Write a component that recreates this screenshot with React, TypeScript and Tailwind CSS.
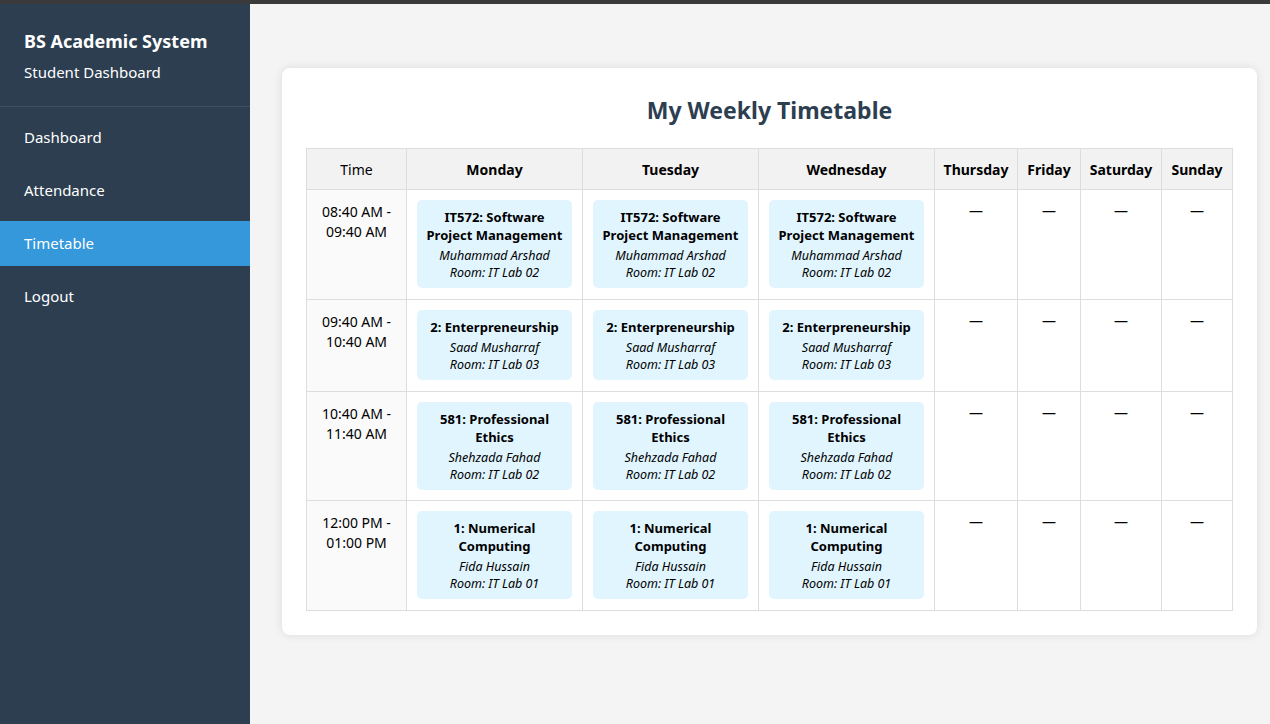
import React from "react";

const font = { fontFamily: '"Noto Sans", "Open Sans", sans-serif' };

type Cls = { title: string; teacher: string; room: string };

const slots: { time: [string, string]; cls: Cls; h: string }[] = [
  { time: ["08:40 AM -", "09:40 AM"], cls: { title: "IT572: Software Project Management", teacher: "Muhammad Arshad", room: "Room: IT Lab 02" }, h: "h-[110px]" },
  { time: ["09:40 AM -", "10:40 AM"], cls: { title: "2: Enterpreneurship", teacher: "Saad Musharraf", room: "Room: IT Lab 03" }, h: "h-[92px]" },
  { time: ["10:40 AM -", "11:40 AM"], cls: { title: "581: Professional Ethics", teacher: "Shehzada Fahad", room: "Room: IT Lab 02" }, h: "h-[109px]" },
  { time: ["12:00 PM -", "01:00 PM"], cls: { title: "1: Numerical Computing", teacher: "Fida Hussain", room: "Room: IT Lab 01" }, h: "h-[110px]" },
];

const days = ["Monday", "Tuesday", "Wednesday", "Thursday", "Friday", "Saturday", "Sunday"];
const widths = ["w-[176px]", "w-[176px]", "w-[176px]", "w-[83px]", "w-[63px]", "w-[81px]", "w-[71px]"];

function ClassBox({ c }: { c: Cls }) {
  return (
    <div className="bg-[#e1f5fe] rounded-[5px] px-2 pt-[8px] pb-[7px] text-center text-black">
      <div className="font-bold text-[13px] leading-[18px]">{c.title}</div>
      <div className="italic text-[12.5px] leading-[17px] mt-[3px]">{c.teacher}</div>
      <div className="italic text-[12.5px] leading-[17px]">{c.room}</div>
    </div>
  );
}

export default function App() {
  const nav = ["Dashboard", "Attendance", "Timetable", "Logout"];
  return (
    <div className="w-[1270px] h-[724px] flex flex-col overflow-hidden" style={font}>
      <div className="h-[4px] bg-[#3a3a3a] shrink-0" />
      <div className="flex flex-1 min-h-0">
        <aside className="w-[250px] bg-[#2c3e50] text-white shrink-0">
          <div className="px-6 pt-[24px] pb-[24px] border-b border-[#3e5063]">
            <div className="text-[18px] font-bold leading-[26px]">BS Academic System</div>
            <div className="text-[15px] leading-[20px] mt-[8px]">Student Dashboard</div>
          </div>
          <nav className="pt-[8px] flex flex-col gap-[8px]">
            {nav.map((n) => (
              <div
                key={n}
                className={`h-[45px] flex items-center px-6 text-[15px] ${n === "Timetable" ? "bg-[#3498db]" : ""}`}
              >
                {n}
              </div>
            ))}
          </nav>
        </aside>
        <main className="flex-1 bg-[#f4f4f4] pl-8 pt-16">
          <div className="w-[975px] bg-white rounded-[8px] shadow-[0_0_10px_rgba(0,0,0,0.1)] px-6 pt-[24px] pb-[24px]">
            <h1 className="text-center text-[23px] font-bold text-[#2c3e50] leading-[36px] mb-[20px]">My Weekly Timetable</h1>
            <table className="border-collapse w-[927px] table-fixed text-[14px] text-black">
              <thead>
                <tr className="h-[41px]">
                  <th className="w-[100px] border border-[#dddddd] bg-[#f2f2f2] font-normal">Time</th>
                  {days.map((d, i) => (
                    <th key={d} className={`${widths[i]} border border-[#dddddd] bg-[#f2f2f2] font-bold`}>{d}</th>
                  ))}
                </tr>
              </thead>
              <tbody>
                {slots.map((s, r) => (
                  <tr key={r} className={s.h}>
                    <td className="border border-[#dddddd] bg-[#fafafa] text-center align-top pt-[12px] leading-[20px]">
                      {s.time[0]}
                      <br />
                      {s.time[1]}
                    </td>
                    {days.map((d, i) => (
                      <td key={d} className="border border-[#dddddd] align-top p-[10px] text-center">
                        {i < 3 ? <ClassBox c={s.cls} /> : <div className="pt-[1px] leading-[20px]">—</div>}
                      </td>
                    ))}
                  </tr>
                ))}
              </tbody>
            </table>
          </div>
        </main>
      </div>
    </div>
  );
}
